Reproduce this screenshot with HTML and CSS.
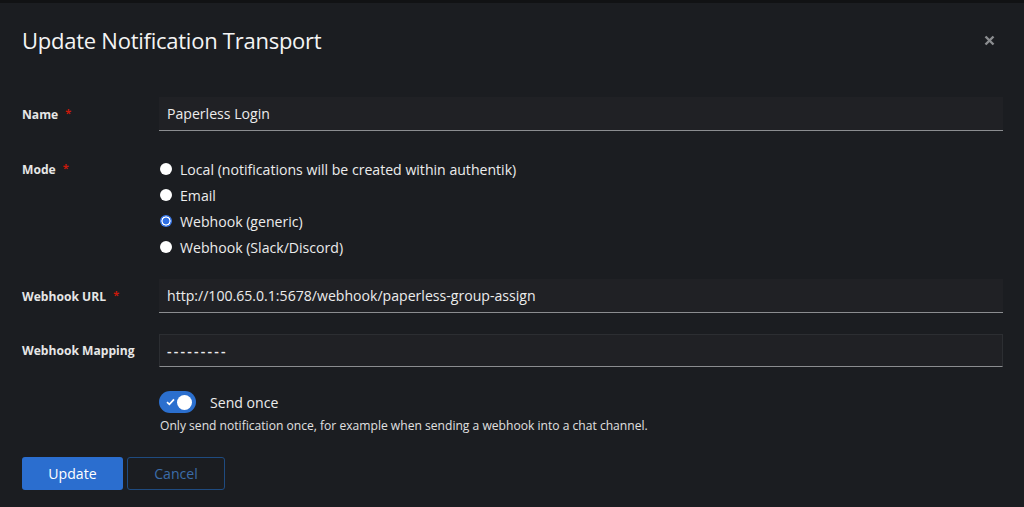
FILE: index.html
```html
<!DOCTYPE html>
<html lang="en">
<head>
<meta charset="utf-8">
<title>Update Notification Transport</title>
<link rel="stylesheet" href="styles.css">
</head>
<body>
<div class="topline"></div>
<div class="modal">
  <header class="modal-header">
    <h1 class="modal-title">Update Notification Transport</h1>
    <button class="close" aria-label="Close">
      <svg width="11" height="11" viewBox="0 0 11 11"><path d="M1.5 1.5 L9.5 9.5 M9.5 1.5 L1.5 9.5" stroke="#8b8d90" stroke-width="2.4" stroke-linecap="butt"/></svg>
    </button>
  </header>
  <form class="form">
    <div class="group g-name">
      <label class="label">Name <span class="req">*</span></label>
      <div class="control"><div class="input">Paperless Login</div></div>
    </div>
    <div class="group g-mode">
      <label class="label label-top">Mode <span class="req">*</span></label>
      <div class="control radios">
        <div class="radio"><span class="dot"></span><span>Local (notifications will be created within authentik)</span></div>
        <div class="radio"><span class="dot"></span><span>Email</span></div>
        <div class="radio"><span class="dot checked"></span><span>Webhook (generic)</span></div>
        <div class="radio"><span class="dot"></span><span>Webhook (Slack/Discord)</span></div>
      </div>
    </div>
    <div class="group g-url">
      <label class="label">Webhook URL <span class="req">*</span></label>
      <div class="control"><div class="input">http://100.65.0.1:5678/webhook/paperless-group-assign</div></div>
    </div>
    <div class="group g-map">
      <label class="label">Webhook Mapping</label>
      <div class="control"><div class="input select"><span class="dashes">---------</span></div></div>
    </div>
    <div class="group g-switch">
      <div class="label"></div>
      <div class="control">
        <div class="switch-row">
          <span class="switch">
            <svg class="check" width="9" height="8" viewBox="0 0 9 8"><path d="M1 4.2 L3.4 6.4 L8 1.4" stroke="#fff" stroke-width="1.7" fill="none"/></svg>
            <span class="knob"></span>
          </span>
          <span class="switch-label">Send once</span>
        </div>
        <div class="helper">Only send notification once, for example when sending a webhook into a chat channel.</div>
      </div>
    </div>
    <div class="actions">
      <button type="button" class="btn primary">Update</button>
      <button type="button" class="btn secondary">Cancel</button>
    </div>
  </form>
</div>
</body>
</html>
```
FILE: styles.css
```css
* { box-sizing: border-box; }
html, body { margin: 0; padding: 0; }
body {
  background: #1b1d21;
  color: #e0e0e0;
  font-family: "Open Sans", "Noto Sans", sans-serif;
  width: 1024px;
  height: 507px;
  overflow: hidden;
}
.topline { height: 3px; background: #111214; }
.modal { padding: 0 21px 0 22px; }
.modal-header {
  display: flex;
  align-items: center;
  justify-content: space-between;
  padding-top: 21px;
}
.modal-title {
  margin: 0;
  font-size: 22px;
  line-height: 32px;
  font-weight: 500;
  color: #f4f4f4;
  letter-spacing: -0.25px;
}
.close {
  background: none;
  border: 0;
  padding: 0;
  margin-right: 8px;
  width: 11px;
  height: 11px;
  display: flex;
}
.form { display: flex; flex-direction: column; padding-top: 41px; }
.group { display: flex; align-items: center; }
.g-mode { margin-top: 24px; align-items: flex-start; }
.g-url { margin-top: 20px; }
.g-map { margin-top: 21px; }
.g-switch { margin-top: 24px; align-items: flex-start; }
.label {
  width: 137px;
  flex: none;
  font-size: 12.1px;
  font-weight: 700;
  color: #e6e6e6;
}
.label-top { padding-top: 5px; line-height: 20px; }
.req { color: #c9190b; margin-left: 4px; font-size: 11px; position: relative; top: -2px; }
.control { flex: 1; }
.input {
  height: 34px;
  background: #202125;
  border-bottom: 1px solid #8b8d90;
  padding: 0 8px;
  display: flex;
  align-items: center;
  font-size: 14.1px;
  color: #ececec;
}
.select { height: 33px; border: 1px solid #2c2e32; border-bottom-color: #8b8d90; padding-left: 7px; }
.dashes { letter-spacing: 2.2px; font-weight: 600; }
.radios { display: flex; flex-direction: column; gap: 2px; padding-top: 2px; }
.radio {
  display: flex;
  align-items: center;
  height: 24px;
  font-size: 14.1px;
  color: #ececec;
}
.dot {
  width: 12px;
  height: 12px;
  border-radius: 50%;
  background: #fff;
  margin: 0 8px 0 1px;
  flex: none;
}
.dot.checked {
  background: radial-gradient(circle, #2f6fe4 0 3.2px, #fff 3.7px 4.3px, #3d7ae8 4.8px);
}
.switch-row { display: flex; align-items: center; height: 22px; }
.switch {
  width: 37px;
  height: 22px;
  border-radius: 11px;
  background: #2b6fce;
  display: flex;
  align-items: center;
  justify-content: space-between;
  padding: 0 4px 0 7px;
}
.knob { width: 15px; height: 15px; border-radius: 50%; background: #fff; }
.check { display: block; }
.switch-label { margin-left: 14px; font-size: 14.1px; color: #ececec; }
.helper { margin-top: 4px; font-size: 12.1px; color: #e0e0e0; line-height: 18px; padding-left: 1px; }
.actions { display: flex; gap: 4px; margin-top: 22px; }
.btn {
  height: 33px;
  font-family: inherit;
  font-size: 14.1px;
  border-radius: 3px;
  padding: 0;
}
.primary { width: 101px; background: #2b6ecf; color: #fff; border: 0; }
.secondary { width: 98px; background: transparent; color: #3b6ca8; border: 1px solid #1f4b80; }
```
